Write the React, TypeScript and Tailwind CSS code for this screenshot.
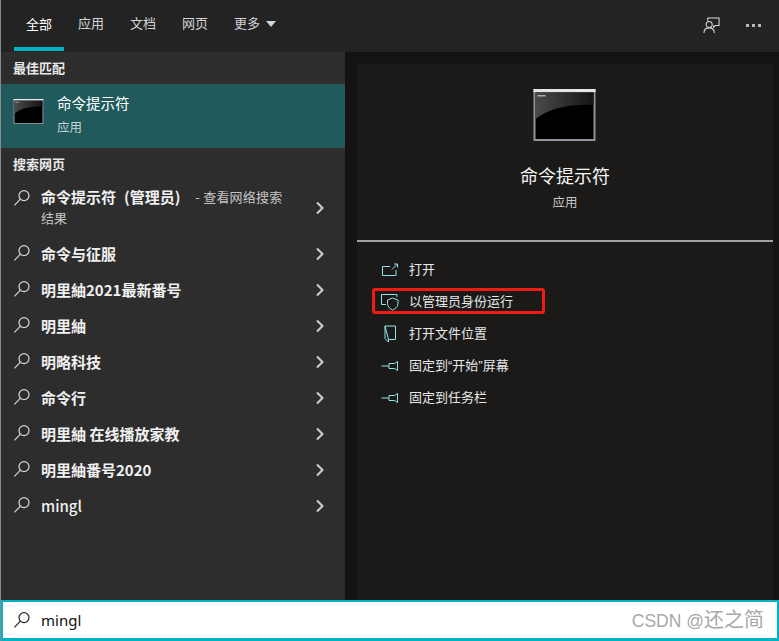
const font = "font-['Noto_Sans_CJK_SC','Liberation_Sans',sans-serif]";

function SearchIcon({ className = "text-[#d8d8d8]" }: { className?: string }) {
  return (
    <svg width="18" height="18" viewBox="0 0 18 18" fill="none" stroke="currentColor" strokeWidth="1.2" className={className}>
      <circle cx="11" cy="6.6" r="5" />
      <path d="M7.4 10.2 1.4 16.4" />
    </svg>
  );
}

function Chevron() {
  return (
    <svg width="10" height="14" viewBox="0 0 10 14" fill="none" stroke="#d0d0d0" strokeWidth="2" className="mt-[1px]">
      <path d="M2 1.5 7.5 7 2 12.5" />
    </svg>
  );
}

function CmdIcon({ large }: { large?: boolean }) {
  const w = large ? 63 : 31;
  const h = large ? 52 : 25;
  return (
    <svg width={w} height={h} viewBox="0 0 62 52">
      <defs>
        <linearGradient id="cmdGlow" x1="0" y1="0" x2="1" y2="0">
          <stop offset="0" stopColor="#4a4a4a" />
          <stop offset="1" stopColor="#141414" />
        </linearGradient>
      </defs>
      <rect x="0" y="0" width="62" height="52" fill="#8f959d" />
      <rect x="0" y="0" width="62" height="3" fill="#e4e6e8" />
      <rect x="2" y="3.5" width="58" height="46.5" fill="#000" />
      <path d="M2 3.5H60V16C38 15 16 19 2 30Z" fill="url(#cmdGlow)" />
      <rect x="4" y="6" width="8" height="1.5" fill="#aaa" />
    </svg>
  );
}

function Row({ label, latin }: { label: string; latin?: boolean }) {
  return (
    <div className="h-9 flex items-center pl-[12px] pr-[20px]">
      <SearchIcon />
      <span className={`ml-[10px] text-[15px] text-[#f0f0f0] leading-none flex-1 ${latin ? "font-medium" : "font-semibold"}`}>{label}</span>
      <Chevron />
    </div>
  );
}

const actionIconClass = "text-[#8fe6ea]";

function OpenIcon() {
  return (
    <svg width="18" height="14" viewBox="0 0 18 14" fill="none" stroke="currentColor" className={actionIconClass}>
      <path d="M9 3.5H1.5V12.5H15V7" />
      <path d="M11 6.5 16 1.5M13 1H16.5V4.5" />
    </svg>
  );
}

function ShieldIcon() {
  return (
    <svg width="20" height="18" viewBox="0 0 20 18" fill="none" stroke="currentColor" className={actionIconClass}>
      <path d="M6 11.5H1.5V1.5H17V4" />
      <path d="M7.5 7 12.5 5 18 7V10.5C18 14 15 16 12.7 17 10.5 16 7.5 14 7.5 10.5Z" />
    </svg>
  );
}

function FolderIcon() {
  return (
    <svg width="14" height="18" viewBox="0 0 14 18" fill="none" stroke="currentColor" className={actionIconClass}>
      <path d="M2 1H12.5V14.5H5.5L2 1ZM2 1V13.5L5.5 17V14.5" />
    </svg>
  );
}

function PinIcon() {
  return (
    <svg width="18" height="12" viewBox="0 0 18 12" fill="none" stroke="currentColor" className={actionIconClass}>
      <path d="M0.5 6H8M8 3.5H13.5L16.5 1.5V10.5L13.5 8.5H8Z" />
    </svg>
  );
}

function Action({ icon, label, boxed }: { icon: React.ReactNode; label: string; boxed?: boolean }) {
  return (
    <div className="h-8 flex items-center relative">
      {boxed && <div className="absolute left-[15px] top-[2px] w-[173px] h-[26px] border-[3px] border-[#f01c14] rounded-[3px]" />}
      <div className="w-[20px] ml-[23px] flex justify-center">{icon}</div>
      <span className="ml-[9px] text-[13px] text-[#e8e8e8] font-['Liberation_Sans','Noto_Sans_CJK_SC',sans-serif]">{label}</span>
    </div>
  );
}

export default function App() {
  const rows = ["命令与征服", "明里紬2021最新番号", "明里紬", "明略科技", "命令行", "明里紬 在线播放家教", "明里紬番号2020"];
  return (
    <div className={`w-[779px] h-[641px] bg-[#141311] flex flex-col overflow-hidden border-l border-[#8a8a8a] ${font}`}>
      {/* Tabs */}
      <div className="h-[52px] shrink-0 bg-[#232323] flex items-stretch text-[13px] text-[#d4d4d4]">
        <div className="ml-[13px] w-[50px] mb-[1px] flex items-center justify-center border-b-[4px] border-[#00b4c4] text-white">全部</div>
        <div className="ml-[14px] flex items-center pb-[6px]">应用</div>
        <div className="ml-[26px] flex items-center pb-[6px]">文档</div>
        <div className="ml-[26px] flex items-center pb-[6px]">网页</div>
        <div className="ml-[26px] flex items-center pb-[6px]">
          更多
          <span className="ml-[6px] mt-[2px] w-0 h-0 border-l-[5px] border-r-[5px] border-t-[6px] border-l-transparent border-r-transparent border-t-[#d4d4d4]" />
        </div>
        <div className="ml-auto flex items-center pr-[18px] pb-[2px]">
          <svg width="17" height="17" viewBox="0 0 18 18" fill="none" stroke="#d8d8d8" strokeWidth="1.1">
            <path d="M5 4V1H17V9H13L11.5 11 11 9" />
            <circle cx="6.5" cy="8" r="3.2" />
            <path d="M1 17C1 13.5 3.5 11.5 6.5 11.5S12 13.5 12 17" />
          </svg>
          <div className="ml-[26px] flex gap-[3px]">
            <span className="w-[3px] h-[3px] bg-[#b8b8b8]" />
            <span className="w-[3px] h-[3px] bg-[#b8b8b8]" />
            <span className="w-[3px] h-[3px] bg-[#b8b8b8]" />
          </div>
        </div>
      </div>

      <div className="flex-1 flex min-h-0">
        {/* Left list */}
        <div className="w-[344px] bg-[#2d2d2d]">
          <div className="h-8 pl-[12px] flex items-center text-[13px] font-semibold text-[#e8e8e8]">最佳匹配</div>
          <div className="h-16 bg-[#205a5c] flex items-center pl-[12px]">
            <div className="mb-[9px]"><CmdIcon /></div>
            <div className="ml-[13px] mb-[3px]">
              <div className="text-[14.5px] text-white leading-[24px]">命令提示符</div>
              <div className="text-[12.5px] text-[#c2d4d4] leading-[22px] mt-[1px]">应用</div>
            </div>
          </div>
          <div className="h-8 pl-[12px] flex items-center text-[13px] font-semibold text-[#e8e8e8]">搜索网页</div>
          <div className="h-[55px] flex items-center pl-[12px] pr-[20px]">
            <div className="self-start mt-[9px]"><SearchIcon /></div>
            <div className="ml-[10px] flex-1">
              <div className="flex items-center h-[20px]">
                <span className="text-[15px] font-semibold text-[#f0f0f0]">命令提示符</span>
                <span className="text-[15px] font-semibold text-[#f0f0f0] ml-[8px]">(管理员)</span>
                <span className="text-[13px] text-[#c4c4c4] ml-[15px] tracking-[0.2px]">- 查看网络搜索</span>
              </div>
              <div className="text-[13px] text-[#c4c4c4] leading-[20px] mt-[1px]">结果</div>
            </div>
            <Chevron />
          </div>
          {rows.map((r) => (
            <Row key={r} label={r} />
          ))}
          <Row label="mingl" latin />
        </div>

        {/* Right panel */}
        <div className="flex-1 p-[12px] pr-[6px] pb-0">
          <div className="h-full bg-[#1b1a19] flex flex-col">
            <div className="h-[178px] flex flex-col items-center border-b-2 border-[#a0a0a0]">
              <div className="mt-[25px] mr-[2px]"><CmdIcon large /></div>
              <div className="mt-[20px] text-[18px] leading-[28px] text-[#f4f4f4]">命令提示符</div>
              <div className="mt-[3px] text-[12.5px] leading-[20px] text-[#c8c8c8]">应用</div>
            </div>
            <div className="pt-[12px]">
              <Action icon={<OpenIcon />} label="打开" />
              <Action icon={<ShieldIcon />} label="以管理员身份运行" boxed />
              <Action icon={<FolderIcon />} label="打开文件位置" />
              <Action icon={<PinIcon />} label="固定到“开始”屏幕" />
              <Action icon={<PinIcon />} label="固定到任务栏" />
            </div>
          </div>
        </div>
      </div>

      {/* Search box */}
      <div className="h-[41px] shrink-0 bg-white border-[2px] border-b-[3px] border-[#00b4c4] flex items-center pl-[10px] relative">
        <SearchIcon className="text-[#222222]" />
        <span className="ml-[10px] text-[15px] text-[#111111] font-['Noto_Sans']">mingl</span>
        <span className="absolute right-[13px] top-[6px] leading-[24px] text-[#a8a8a8] font-['Liberation_Sans','Noto_Sans_CJK_SC',sans-serif]">
          <span className="text-[17.5px]">CSDN @</span>
          <span className="text-[20px]">还之简</span>
        </span>
      </div>
    </div>
  );
}
